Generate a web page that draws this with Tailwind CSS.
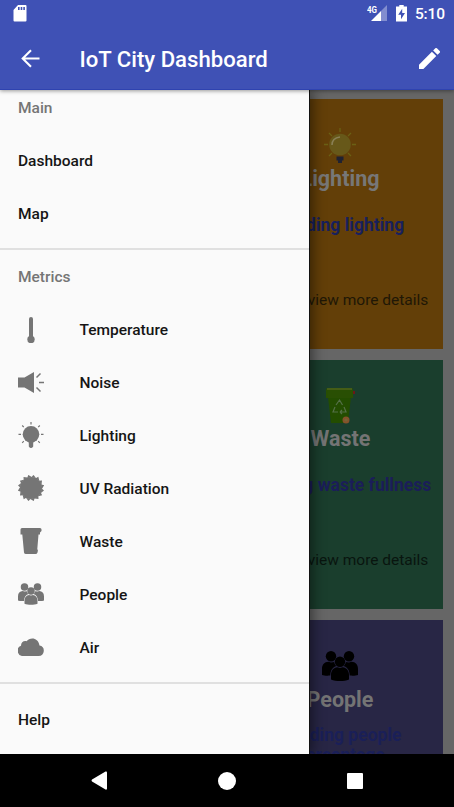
<!DOCTYPE html>
<html lang="en">
<head>
<meta charset="utf-8">
<title>IoT City Dashboard</title>
<script src="https://cdn.jsdelivr.net/npm/@tailwindcss/browser@4"></script>
</head>
<body class="w-[454px] h-[807px] overflow-hidden bg-black font-['Roboto',sans-serif] flex flex-col">
<svg class="hidden">
  <symbol id="people" viewBox="0 0 36 30">
    <circle cx="9" cy="5.3" r="5.2"/><circle cx="27" cy="5.3" r="5.2"/>
    <path d="M0 24V18c0-4.500 2.500-7 6.500-7.200l2.500.8 3.200-.5c.3 1.600 1 3 2.200 4C10.500 16.500 8.500 19.500 8.300 24.600 5 24.900 2 24.700 0 24Z"/>
    <path d="M36 24V18c0-4.500-2.500-7-6.500-7.200l-2.500.8-3.200-.5c-.3 1.600-1 3-2.200 4 3.900 1.400 5.900 4.400 6.100 9.500 3.300.3 6.300.1 8.300-.6Z"/>
    <circle cx="18" cy="10.700" r="5.200"/>
    <path d="M9 28.500V24c0-4.500 2.600-7.200 6.300-7.700l2.700.7 2.700-.7C24.400 16.800 27 19.500 27 24v4.500c-5 2-13 2-18 0Z"/>
  </symbol>
</svg>
<header class="relative z-20 h-[90px] shrink-0 bg-[#3f51b5] border-b border-[#2f43b0] shadow-[0_1px_4px_rgba(0,0,0,0.4)] text-white">
  <div class="h-7 pl-[13px] pr-[9px] flex items-center">
    <svg class="w-[14px] h-[17px] -mt-[2px]" viewBox="0 0 14 17"><path fill="#fff" d="M5 0h7.500Q13.500 0 13.500 1v14.500q0 1-1 1h-11q-1 0-1-1V5Z"/><path fill="#3f51b5" d="M5 2h1.600v3H5zM7.700 2h1.600v3H7.700zM10.300 2h1.600v3h-1.600z"/></svg>
    <div class="ml-auto flex items-center">
      <svg class="w-5 h-[17px] -mt-[2px]" viewBox="0 0 20 17"><text x="0" y="7.500" font-size="9" font-weight="700" fill="#fff" textLength="10" lengthAdjust="spacingAndGlyphs">4G</text><path fill="#fff" fill-opacity=".35" d="M20 0v16h-6V6Z"/><path fill="#fff" d="M4 16 14 6v10Z"/></svg>
      <svg class="ml-[9px] w-[11px] h-[17px] -mt-[2px]" viewBox="0 0 11 17"><path fill="#fff" d="M3.300 0h4.400v1.500H11V16.500H0V1.500h3.300Z"/><path fill="#3f51b5" d="M6.200 3.700 2.200 9.700H5v4.500l4-6.200H6.200Z"/></svg>
      <span class="ml-2 text-[15.500px] leading-5 font-medium tracking-[-0.1px]">5:10</span>
    </div>
  </div>
  <div class="h-[62px] pl-[21px] pr-[14px] flex items-center">
    <svg class="w-[19px] h-[19px] -mt-[2px]" viewBox="0 0 19 19" fill="none" stroke="#fff" stroke-width="2.100"><path d="M18.500 9.500H2M10 1.200 1.700 9.500 10 17.800"/></svg>
    <h1 class="ml-[39.500px] text-[22.150px] leading-7 font-medium">IoT City Dashboard</h1>
    <svg class="ml-auto w-[21px] h-[21px] -mt-[2px]" viewBox="3 3 18 18" fill="#fff"><path d="M3 17.250V21h3.750L17.810 9.940l-3.750-3.750L3 17.250ZM20.710 7.040a1 1 0 0 0 0-1.410l-2.340-2.340a1 1 0 0 0-1.410 0l-1.830 1.830 3.750 3.750 1.830-1.830Z"/></svg>
  </div>
</header>
<main class="relative h-[664px] shrink-0 overflow-hidden bg-[#666]">
  <div class="flex flex-col items-end gap-[11px] pt-[9px] pr-[11px] text-center">
    <section class="w-[206px] h-[250px] shrink-0 bg-[#633f08] flex flex-col items-center">
      <svg class="mt-[28px] w-9 h-9" viewBox="0 0 36 36"><g stroke="#6b6014" stroke-width="1.300"><path d="M18 1v4M7 6l3 3M29 6l-3 3M2 17.500h4M30 17.500h4M7 29l3-3M29 29l-3-3"/></g><circle cx="18" cy="17.500" r="10.800" fill="#675819"/><path d="M10 18q0-7 8-8" fill="none" stroke="#8a8056" stroke-width="1.500"/><path fill="#202231" d="M14.500 29.500h7v4h-1.500V36h-4v-2.500h-1.500Z"/></svg>
      <h2 class="mt-1 text-[21.500px] leading-6 font-bold text-[#777]">Lighting</h2>
      <p class="mt-[22px] text-[17.500px] leading-6 font-bold text-[#17205d] whitespace-nowrap">Building lighting</p>
      <p class="mt-[51px] pl-px text-[15.500px] leading-6 text-[#201706] whitespace-nowrap">Click to view more details</p>
    </section>
    <section class="w-[206px] h-[249px] shrink-0 bg-[#1a3e2d] flex flex-col items-center">
      <svg class="mt-[28px] w-9 h-9" viewBox="0 0 36 36"><path fill="#234d00" d="M6 9h23l-3 26H9Z"/><path fill="#294f03" d="M4 2q0-2 2-2h23q2 0 2 2v8H4Z"/><path fill="#455d16" d="M5 0h25v2H5Z"/><path fill="#6b1818" d="M31 3h2v3h-2Z"/><path d="m14 17 3.500-5 3 5M22 19l2 5h-5M16 24h-5l2-5M18 24l2-2M18 24l2 2" fill="none" stroke="#557047" stroke-width="1.200"/><circle cx="24" cy="32" r="3.500" fill="#85522a"/><circle cx="24" cy="32" r="1.600" fill="#796236"/></svg>
      <h2 class="mt-[3px] pl-px text-[21.500px] leading-6 font-bold text-[#747474]">Waste</h2>
      <p class="mt-[22px] text-[17.500px] leading-6 font-bold text-[#1b1d59] whitespace-nowrap">Building waste fullness</p>
      <p class="mt-[51px] pl-px text-[15.500px] leading-6 text-[#09150f] whitespace-nowrap">Click to view more details</p>
    </section>
    <section class="w-[206px] h-[249px] shrink-0 bg-[#282645] flex flex-col items-center">
      <svg class="mt-[31px] w-9 h-[30px]" fill="#000"><use href="#people"/></svg>
      <h2 class="mt-[7px] text-[21.500px] leading-6 font-bold text-[#747474]">People</h2>
      <p class="mt-[13px] pl-px text-[17.500px] leading-[20px] font-bold text-[#1a1f58] whitespace-nowrap">Building people<br>percentage</p>
    </section>
  </div>
  <nav class="absolute left-0 top-0 w-[309px] h-full bg-[#fafafa] shadow-[1px_0_0_#111,4px_0_12px_rgba(0,0,0,0.45)] overflow-hidden flex flex-col text-[15.500px] font-medium text-[#151515]">
    <div class="-mt-[9px] h-[53px] shrink-0 pl-[18px] pt-[2px] flex items-center text-[#757575]">Main</div>
    <div class="h-[53px] shrink-0 pl-[18px] pt-[2px] flex items-center">Dashboard</div>
    <div class="h-[53px] shrink-0 pl-[18px] pt-[2px] flex items-center">Map</div>
    <div class="mt-2 h-[2px] shrink-0 bg-[#e0e0e0]"></div>
    <div class="h-[53px] shrink-0 pl-[18px] pt-[2px] flex items-center text-[#757575]">Metrics</div>
    <div class="h-[53px] shrink-0 pl-[18px] flex items-center gap-[35.500px]">
      <svg class="w-[26px] h-[26px]" viewBox="0 0 26 26" fill="#757575"><rect x="11" width="4" height="22" rx="2"/><circle cx="13" cy="22.500" r="3.700"/></svg><span class="pt-[2px]">Temperature</span></div>
    <div class="h-[53px] shrink-0 pl-[18px] flex items-center gap-[35.500px]">
      <svg class="w-[26px] h-[26px]" viewBox="0 0 26 26" fill="#757575"><path d="M0 7.500h6.500L16 2v21l-9.500-5.500H0Z"/><path d="m18.500 7.500 4-4M21 12.600h5M18.500 17.500l4 4" stroke="#757575" stroke-width="1.500"/></svg><span class="pt-[2px]">Noise</span></div>
    <div class="h-[53px] shrink-0 pl-[18px] flex items-center gap-[35.500px]">
      <svg class="w-[26px] h-[26px] -mt-px" viewBox="0 0 26 26" fill="#757575"><circle cx="13" cy="12.300" r="8.300"/><path d="M9.500 18.500h7q-1.300 1.200-1.300 3V24.500q-2.200 3-4.400 0V21.500q0-1.800-1.300-3Z"/><path d="M13 0v2.500M4.200 3.500l1.600 1.600M21.800 3.500l-1.600 1.600M.5 12.300H3M23 12.300h2.500M4.200 20.800l1.600-1.600M21.800 20.800l-1.600-1.600" stroke="#757575" stroke-width="1.200"/></svg><span class="pt-[2px]">Lighting</span></div>
    <div class="h-[53px] shrink-0 pl-[18px] flex items-center gap-[35.500px]">
      <svg class="w-[26px] h-[26px] -mt-[2px]" viewBox="-13 -13 26 26" fill="#757575"><circle r="11"/><g id="ray"><path id="t" d="M.2-10.500 2.500-13.100 4.900-9.900Z"/><use href="#t" transform="rotate(22.500)"/><use href="#t" transform="rotate(45)"/><use href="#t" transform="rotate(67.500)"/></g><use href="#ray" transform="rotate(90)"/><use href="#ray" transform="rotate(180)"/><use href="#ray" transform="rotate(270)"/></svg><span class="pt-[2px]">UV Radiation</span></div>
    <div class="h-[53px] shrink-0 pl-[18px] flex items-center gap-[35.500px]">
      <svg class="w-[26px] h-[26px] -mt-[2px]" viewBox="0 0 26 26" fill="#757575"><path d="M2.500 1.500Q2.500 0 4 0h18q1.500 0 1.500 1.500V3L22 4.500V6.500h-1.500L19.300 21q1.200 1 .2 3.500Q19 26 17.500 26H8q-1.700 0-2-1.500L4.300 6.500H2.500Z"/></svg><span class="pt-[2px]">Waste</span></div>
    <div class="h-[53px] shrink-0 pl-[18px] flex items-center gap-[35.500px]">
      <svg class="w-[26px] h-[22px] -mt-px" fill="#757575"><use href="#people"/></svg><span class="pt-[2px]">People</span></div>
    <div class="h-[53px] shrink-0 pl-[18px] flex items-center gap-[35.500px]">
      <svg class="w-[26px] h-[18px] -mt-[2px]" viewBox="0 0 26 18" fill="#757575"><path d="M5.500 18A5.300 5.300 0 0 1 3 7.800C3 4.500 5.500 2.500 8.500 3.200 11.500-.8 20-1.500 21.500 7.500A5.300 5.300 0 0 1 20.500 18Z"/></svg><span class="pt-[2px]">Air</span></div>
    <div class="mt-2 h-[2px] shrink-0 bg-[#e0e0e0]"></div>
    <div class="mt-2 h-[53px] shrink-0 pl-[18px] pt-[4px] flex items-center">Help</div>
  </nav>
</main>
<footer class="h-[53px] shrink-0 bg-black flex items-center pl-[91px]">
  <svg class="w-4 h-[19px]" viewBox="0 0 16 19"><path fill="#fff" d="M14.500.5Q16 0 16 1.500v16q0 1.500-1.500 1L1 10.500Q0 9.500 1 8.500Z"/></svg>
  <div class="ml-[111px] w-[18px] h-[18px] rounded-full bg-white"></div>
  <div class="ml-[111px] w-[16px] h-[16px] rounded-[1px] bg-white"></div>
</footer>
</body>
</html>
